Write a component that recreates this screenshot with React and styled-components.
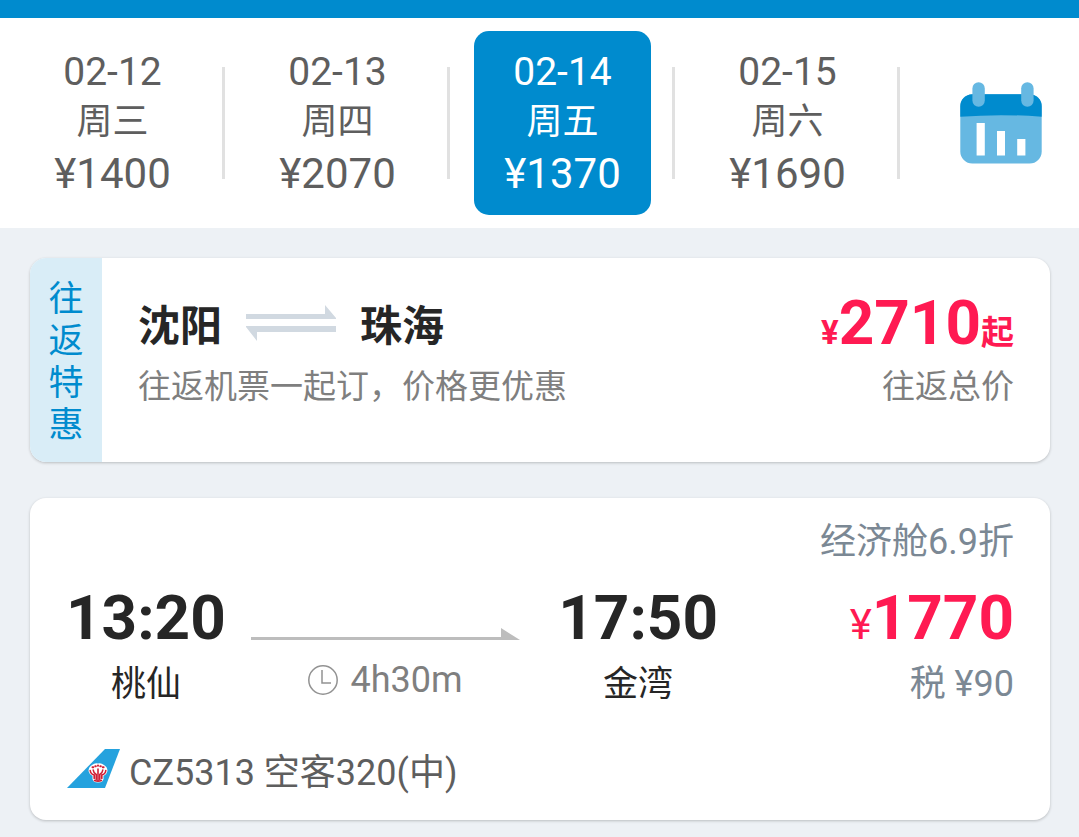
import React from "react";
import styled, { createGlobalStyle } from "styled-components";

const hanFont = `"Noto Sans CJK SC", sans-serif`;

const GlobalStyle = createGlobalStyle`
  * { box-sizing: border-box; }
  body {
    margin: 0;
    background: #edf1f5;
    font-family: Roboto, ${hanFont};
    color: #262626;
  }
  button { font-family: inherit; }
`;

const Page = styled.div`
  min-height: 100vh;
`;

const TopBar = styled.header`
  height: 18px;
  background: #008bce;
`;

const DateStrip = styled.nav`
  display: grid;
  grid-template-columns: repeat(4, 225fr) 179fr;
  align-items: center;
  padding: 13px 0;
  background: #fff;
`;

const DayCell = styled.div`
  display: flex;
  align-items: center;
  gap: 21px;
  padding-left: 24px;
`;

const DayButton = styled.button`
  flex: 1;
  display: flex;
  flex-direction: column;
  align-items: center;
  padding: 16px 0 14px;
  border: 0;
  border-radius: 15px;
  background: ${(p) => (p.$active ? "#008bce" : "transparent")};
  color: ${(p) => (p.$active ? "#fff" : "#5e5e5e")};
  cursor: pointer;
`;

const DayDate = styled.span`
  font-size: 39px;
  line-height: 50px;
  white-space: nowrap;
`;

const DayWeek = styled.span`
  font-size: 36px;
  line-height: 50px;
`;

const DayPrice = styled.span`
  font-size: 42px;
  line-height: 54px;
`;

const Divider = styled.span`
  width: 3px;
  height: 112px;
  background: #e1e1e1;
`;

const CalendarButton = styled.button`
  justify-self: end;
  display: flex;
  margin-right: 37px;
  padding: 0;
  border: 0;
  background: transparent;
  cursor: pointer;
`;

const Results = styled.main`
  display: flex;
  flex-direction: column;
  gap: 36px;
  padding: 30px 29px 17px 30px;
`;

const Card = styled.article`
  overflow: hidden;
  border-radius: 16px;
  background: #fff;
  box-shadow: 0 1px 3px rgba(0, 0, 0, 0.22);
`;

const DealCard = styled(Card)`
  display: flex;
`;

const DealTag = styled.div`
  width: 72px;
  padding: 17px 18px 19px;
  background: #d9edf7;
  color: #008bce;
  font-family: ${hanFont};
  font-size: 35px;
  line-height: 42px;
  text-align: center;
`;

const DealBody = styled.div`
  flex: 1;
  display: flex;
  justify-content: space-between;
  padding: 32px 36px 0;
`;

const Route = styled.h2`
  display: flex;
  align-items: center;
  gap: 24px;
  margin: 0;
  font-family: ${hanFont};
  font-size: 42px;
  line-height: 66px;
  font-weight: 700;
`;

const Note = styled.p`
  margin: 0;
  color: #7f7f7f;
  font-family: ${hanFont};
  font-size: 33px;
  line-height: 56px;
`;

const DealPrice = styled.div`
  text-align: right;
`;

const Amount = styled.div`
  color: #ff1a52;
  font-size: 62px;
  line-height: ${(p) => p.$line}px;
  font-weight: 700;
  white-space: nowrap;
`;

const AmountUnit = styled.span`
  font-size: 33px;
  line-height: 1;
`;

const AmountSign = styled.span`
  font-size: 42px;
  line-height: 1;
  font-weight: 400;
`;

const FlightCard = styled(Card)`
  padding: 17px 36px 22px;
`;

const Cabin = styled.div`
  color: #7b8894;
  font-size: 36px;
  line-height: 54px;
  text-align: right;
`;

const Schedule = styled.div`
  display: flex;
`;

const Endpoint = styled.div`
  text-align: center;
`;

const Time = styled.div`
  font-size: 62px;
  line-height: 98px;
  font-weight: 700;
`;

const Station = styled.div`
  font-size: 35px;
  line-height: 36px;
`;

const Leg = styled.div`
  flex: 1;
  padding: 59px 38px 0 25px;
`;

const LegArrow = styled.div`
  display: flex;
`;

const LegLine = styled.div`
  flex: 1;
  align-self: flex-end;
  height: 3px;
  background: #bdbdbd;
`;

const Duration = styled.div`
  display: flex;
  align-items: center;
  justify-content: center;
  gap: 12px;
  margin-top: 20px;
  color: #7f7f7f;
  font-size: 36px;
  line-height: 40px;
`;

const Fare = styled.div`
  width: 296px;
  text-align: right;
`;

const Tax = styled.div`
  color: #7b8894;
  font-size: 36px;
  line-height: 34px;
`;

const Plane = styled.div`
  display: flex;
  align-items: flex-start;
  gap: 9px;
  margin-top: 45px;
  color: #5e5e5e;
  font-size: 36px;
  line-height: 50px;
`;

const days = [
  { date: "02-12", week: "周三", price: "¥1400" },
  { date: "02-13", week: "周四", price: "¥2070" },
  { date: "02-14", week: "周五", price: "¥1370", active: true },
  { date: "02-15", week: "周六", price: "¥1690" },
];

const CalendarIcon = () => (
  <svg width="82" height="82" viewBox="0 0 82 82" aria-hidden="true">
    <rect x="0.3" y="12.3" width="81.4" height="69.2" rx="12" fill="#66b8e2" />
    <path d="M0.3 34.8V24.3a12 12 0 0 1 12-12h57.4a12 12 0 0 1 12 12v10.5Q41 31.5 0.3 34.8Z" fill="#008bce" />
    <rect x="12.4" y="0.2" width="12.4" height="24.6" rx="6.2" fill="#66b8e2" />
    <rect x="61.2" y="0.2" width="12.4" height="24.6" rx="6.2" fill="#66b8e2" />
    <path d="M16.6 41h8.2v32.6h-8.2zM37 49h8v24.6h-8zM57.2 57h8.2v16.6h-8.2z" fill="#fff" />
  </svg>
);

const SwapIcon = () => (
  <svg width="90" height="36" viewBox="0 0 90 36" role="img" aria-label="往返">
    <path d="M0 9h79V0l11 13v1H0zM90 27H11v9L0 22v-1h90z" fill="#d1d9e1" />
  </svg>
);

const ClockIcon = () => (
  <svg width="30" height="30" viewBox="0 0 30 30" fill="none" stroke="#929292" strokeWidth="1.5" aria-hidden="true">
    <circle cx="15" cy="15" r="14.2" />
    <path d="M14 5v13h9" />
  </svg>
);

const ArrowHead = () => (
  <svg width="19" height="12" viewBox="0 0 19 12" aria-hidden="true">
    <path d="M0 0L19 12H0z" fill="#bdbdbd" />
  </svg>
);

const AirlineLogo = () => (
  <svg width="54" height="40" viewBox="0 0 54 40" aria-hidden="true">
    <path d="M1 40L39 1h15L39 40z" fill="#25a2de" />
    <path
      d="M26 17Q29 14.5 32 15.5Q35 14.5 38 17Q41.500 19 41.500 23Q41 26 37.500 28V31Q37 34.500 32 34.500Q27 34.500 26.500 31V28Q23 26 22.500 23Q22.500 19 26 17Z"
      fill="#fff"
    />
    <g fill="none" stroke="#cf1f35" strokeLinecap="round">
      <path
        strokeWidth="1.6"
        d="M28.5 32.5Q32 34 35.5 32.5M28.2 30.5V27Q24.5 26 24.2 22.500M35.8 30.5V27Q39.5 26 39.8 22.500M30.2 31.5V26.5Q27.5 25 27.2 22M33.8 31.5V26.5Q36.5 25 36.8 22M32 32V21"
      />
      <path strokeWidth="2" d="M26.5 19.2h.8M29.3 18.2h.5M32 17.5v.3M34.3 18.2h.5M36.8 19.2h.8" />
    </g>
  </svg>
);

export default function App() {
  return (
    <Page>
      <GlobalStyle />
      <TopBar />
      <DateStrip>
        {days.map((d) => (
          <DayCell key={d.date}>
            <DayButton type="button" $active={d.active} aria-pressed={!!d.active}>
              <DayDate>{d.date}</DayDate>
              <DayWeek>{d.week}</DayWeek>
              <DayPrice>{d.price}</DayPrice>
            </DayButton>
            <Divider />
          </DayCell>
        ))}
        <CalendarButton type="button" aria-label="日历">
          <CalendarIcon />
        </CalendarButton>
      </DateStrip>
      <Results>
        <DealCard>
          <DealTag>往返特惠</DealTag>
          <DealBody>
            <div>
              <Route>
                <span>沈阳</span>
                <SwapIcon />
                <span>珠海</span>
              </Route>
              <Note>往返机票一起订，价格更优惠</Note>
            </div>
            <DealPrice>
              <Amount $line={66}>
                <AmountUnit>¥</AmountUnit>2710<AmountUnit>起</AmountUnit>
              </Amount>
              <Note>往返总价</Note>
            </DealPrice>
          </DealBody>
        </DealCard>
        <FlightCard>
          <Cabin>经济舱6.9折</Cabin>
          <Schedule>
            <Endpoint>
              <Time>13:20</Time>
              <Station>桃仙</Station>
            </Endpoint>
            <Leg>
              <LegArrow>
                <LegLine />
                <ArrowHead />
              </LegArrow>
              <Duration>
                <ClockIcon />
                <span>4h30m</span>
              </Duration>
            </Leg>
            <Endpoint>
              <Time>17:50</Time>
              <Station>金湾</Station>
            </Endpoint>
            <Fare>
              <Amount $line={98}>
                <AmountSign>¥</AmountSign>1770
              </Amount>
              <Tax>税 ¥90</Tax>
            </Fare>
          </Schedule>
          <Plane>
            <AirlineLogo />
            <span>CZ5313 空客320(中)</span>
          </Plane>
        </FlightCard>
      </Results>
    </Page>
  );
}
